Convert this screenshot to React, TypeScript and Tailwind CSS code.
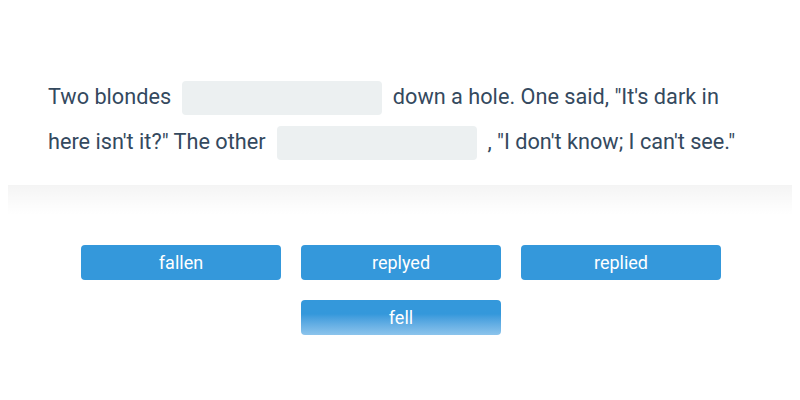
export default function App() {
  const blank = "inline-block align-middle w-[200px] h-[34px] rounded-[4px] bg-[#ecf0f1] mx-[5.5px]";
  const btn = "w-[200px] h-[35px] rounded-[4px] bg-[#3498db] text-white text-[18px] flex items-center justify-center";
  return (
    <div className="w-[800px] h-[400px] bg-white" style={{ fontFamily: "Roboto, 'Noto Sans', sans-serif" }}>
      <div className="mx-[8px] pt-[74px] pb-[21px] px-[40px] bg-white text-[21.7px] leading-[45px] text-[#34495e]">
        Two blondes <span className={blank}></span> down a hole. One said, "It's dark in here isn't it?" The other <span className={blank}></span> , "I don't know; I can't see."
      </div>
      <div className="mx-[8px] h-[30px] bg-gradient-to-b from-[rgba(0,0,0,0.045)] to-[rgba(0,0,0,0)]"></div>
      <div className="mt-[30px] pl-[2px] flex flex-col items-center gap-[20px]">
        <div className="flex gap-[20px]">
          <div className={btn}>fallen</div>
          <div className={btn}>replyed</div>
          <div className={btn}>replied</div>
        </div>
        <div className="w-[200px] h-[35px] rounded-[4px] text-white text-[18px] flex items-center justify-center bg-gradient-to-b from-[#3498db] from-40% to-[#8cc4ec]">fell</div>
      </div>
    </div>
  );
}
